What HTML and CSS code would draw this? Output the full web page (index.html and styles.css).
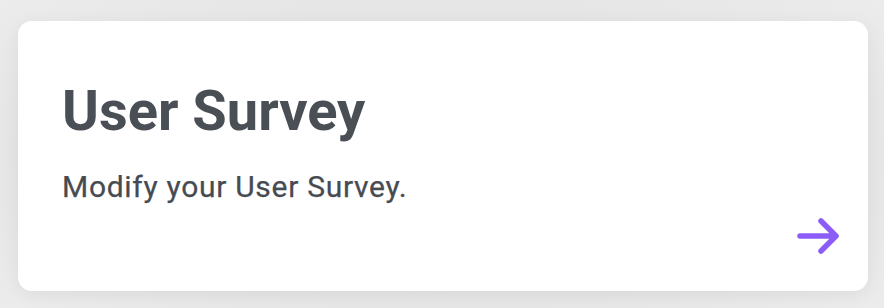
FILE: index.html
```html
<!DOCTYPE html>
<html>
<head>
<meta charset="utf-8">
<link rel="stylesheet" href="styles.css">
</head>
<body>
<div class="card">
  <h1 class="title">User Survey</h1>
  <p class="desc">Modify your User Survey.</p>
  <div class="footer">
    <svg class="arrow" width="48" height="48" viewBox="0 0 24 24" fill="none" stroke="#8b5cf6" stroke-width="2.75" stroke-linecap="round" stroke-linejoin="round">
      <path d="M13.5 4.5L21 12l-7.5 7.5M21 12H3"/>
    </svg>
  </div>
</div>
</body>
</html>
```
FILE: styles.css
```css
html, body {
  margin: 0;
  height: 100%;
}
body {
  background: radial-gradient(ellipse at 50% 50%, #dcdcdc 0%, #e6e6e6 70%, #ececec 100%);
  padding: 21px 16px 17px 18px;
  box-sizing: border-box;
  font-family: Roboto, "Liberation Sans", sans-serif;
}
.card {
  background: #ffffff;
  border-radius: 14px;
  height: 270px;
  box-sizing: border-box;
  padding: 60px 26px 31px 44px;
  display: flex;
  flex-direction: column;
  box-shadow: 0 4px 18px rgba(0,0,0,0.06);
}
.title {
  margin: 0;
  font-size: 56px;
  font-weight: 700;
  line-height: 60px;
  color: #4a4f56;
}
.desc {
  margin: 29px 0 0 0;
  font-size: 30px;
  line-height: 34px;
  letter-spacing: 0.7px;
  color: #464b52;
  -webkit-text-stroke: 0.25px #464b52;
}
.footer {
  margin-top: auto;
  display: flex;
  justify-content: flex-end;
}
.arrow {
  display: block;
}
```
